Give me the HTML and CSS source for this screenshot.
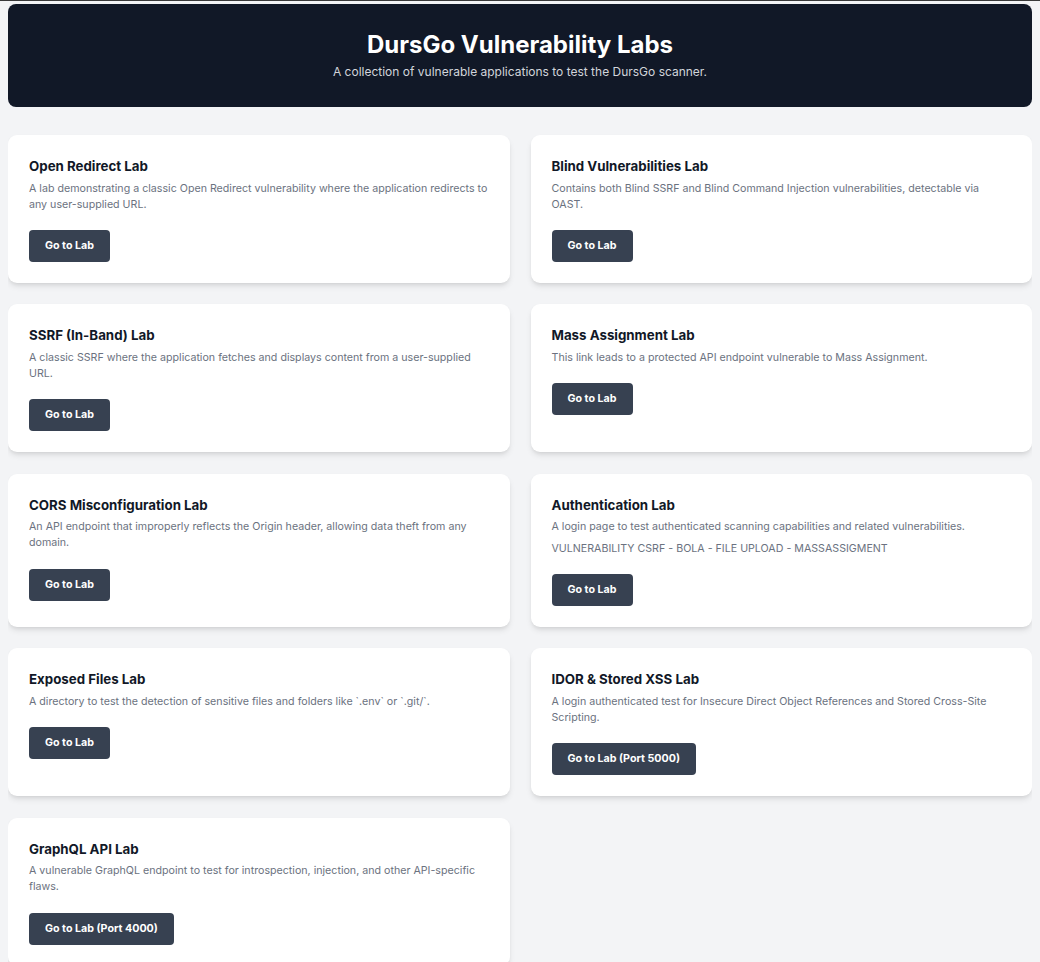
FILE: index.html
```html
<!DOCTYPE html>
<html lang="en">
<head>
<meta charset="utf-8">
<title>DursGo Vulnerability Labs</title>
<link rel="stylesheet" href="styles.css">
</head>
<body>
<header class="hero">
  <h1 class="hero-title">DursGo Vulnerability Labs</h1>
  <p class="hero-sub">A collection of vulnerable applications to test the DursGo scanner.</p>
</header>
<main class="grid">
  <section class="card">
    <h2 class="card-title">Open Redirect Lab</h2>
    <p class="card-desc">A lab demonstrating a classic Open Redirect vulnerability where the application redirects to any user-supplied URL.</p>
    <a class="btn" href="#">Go to Lab</a>
  </section>
  <section class="card">
    <h2 class="card-title">Blind Vulnerabilities Lab</h2>
    <p class="card-desc">Contains both Blind SSRF and Blind Command Injection vulnerabilities, detectable via OAST.</p>
    <a class="btn" href="#">Go to Lab</a>
  </section>
  <section class="card">
    <h2 class="card-title">SSRF (In-Band) Lab</h2>
    <p class="card-desc">A classic SSRF where the application fetches and displays content from a user-supplied URL.</p>
    <a class="btn" href="#">Go to Lab</a>
  </section>
  <section class="card">
    <h2 class="card-title">Mass Assignment Lab</h2>
    <p class="card-desc">This link leads to a protected API endpoint vulnerable to Mass Assignment.</p>
    <a class="btn" href="#">Go to Lab</a>
  </section>
  <section class="card">
    <h2 class="card-title">CORS Misconfiguration Lab</h2>
    <p class="card-desc">An API endpoint that improperly reflects the Origin header, allowing data theft from any domain.</p>
    <a class="btn" href="#">Go to Lab</a>
  </section>
  <section class="card">
    <h2 class="card-title">Authentication Lab</h2>
    <p class="card-desc">A login page to test authenticated scanning capabilities and related vulnerabilities.</p>
    <p class="card-note">VULNERABILITY CSRF - BOLA - FILE UPLOAD - MASSASSIGMENT</p>
    <a class="btn" href="#">Go to Lab</a>
  </section>
  <section class="card">
    <h2 class="card-title">Exposed Files Lab</h2>
    <p class="card-desc">A directory to test the detection of sensitive files and folders like `.env` or `.git/`.</p>
    <a class="btn" href="#">Go to Lab</a>
  </section>
  <section class="card">
    <h2 class="card-title">IDOR &amp; Stored XSS Lab</h2>
    <p class="card-desc">A login authenticated test for Insecure Direct Object References and Stored Cross-Site Scripting.</p>
    <a class="btn" href="#">Go to Lab (Port 5000)</a>
  </section>
  <section class="card">
    <h2 class="card-title">GraphQL API Lab</h2>
    <p class="card-desc">A vulnerable GraphQL endpoint to test for introspection, injection, and other API-specific flaws.</p>
    <a class="btn" href="#">Go to Lab (Port 4000)</a>
  </section>
</main>
</body>
</html>
```
FILE: styles.css
```css
html {
  border-top: 1px solid #3a3a3a;
  background: #f3f4f6;
}
body {
  margin: 3px 8px 8px;
  background: #f3f4f6;
  font-family: Inter, "Liberation Sans", sans-serif;
  color: #111827;
}
.hero {
  background: #111827;
  border-radius: 8px;
  height: 103px;
  box-sizing: border-box;
  padding-top: 26px;
  text-align: center;
  color: #fff;
}
.hero-title {
  margin: 0;
  font-size: 24px;
  line-height: 30px;
  font-weight: 700;
}
.hero-sub {
  margin: 3px 0 0;
  font-size: 12px;
  line-height: 18px;
  color: #d1d5db;
}
.grid {
  margin-top: 28px;
  display: grid;
  grid-template-columns: 1fr 1fr;
  gap: 21.4px 21px;
}
.card {
  background: #fff;
  border-radius: 9px;
  box-shadow: 0 4px 6px -1px rgba(0, 0, 0, 0.1), 0 2px 4px -2px rgba(0, 0, 0, 0.1);
  padding: 21px;
  display: flex;
  flex-direction: column;
  align-items: flex-start;
}
.card-title {
  margin: 0;
  font-size: 13.3px;
  line-height: 20px;
  font-weight: 700;
  color: #111827;
}
.card-desc {
  margin: 4.5px 0 0;
  font-size: 10.67px;
  line-height: 16px;
  color: #6b7280;
}
.card-note {
  margin: 6px 0 -1px;
  font-size: 10.67px;
  line-height: 16px;
  color: #6b7280;
}
.btn {
  margin-top: 17.5px;
  display: inline-block;
  background: #374151;
  color: #fff;
  text-decoration: none;
  font-size: 10.7px;
  font-weight: 700;
  line-height: 32px;
  height: 32px;
  padding: 0 16px;
  border-radius: 4px;
}
```
